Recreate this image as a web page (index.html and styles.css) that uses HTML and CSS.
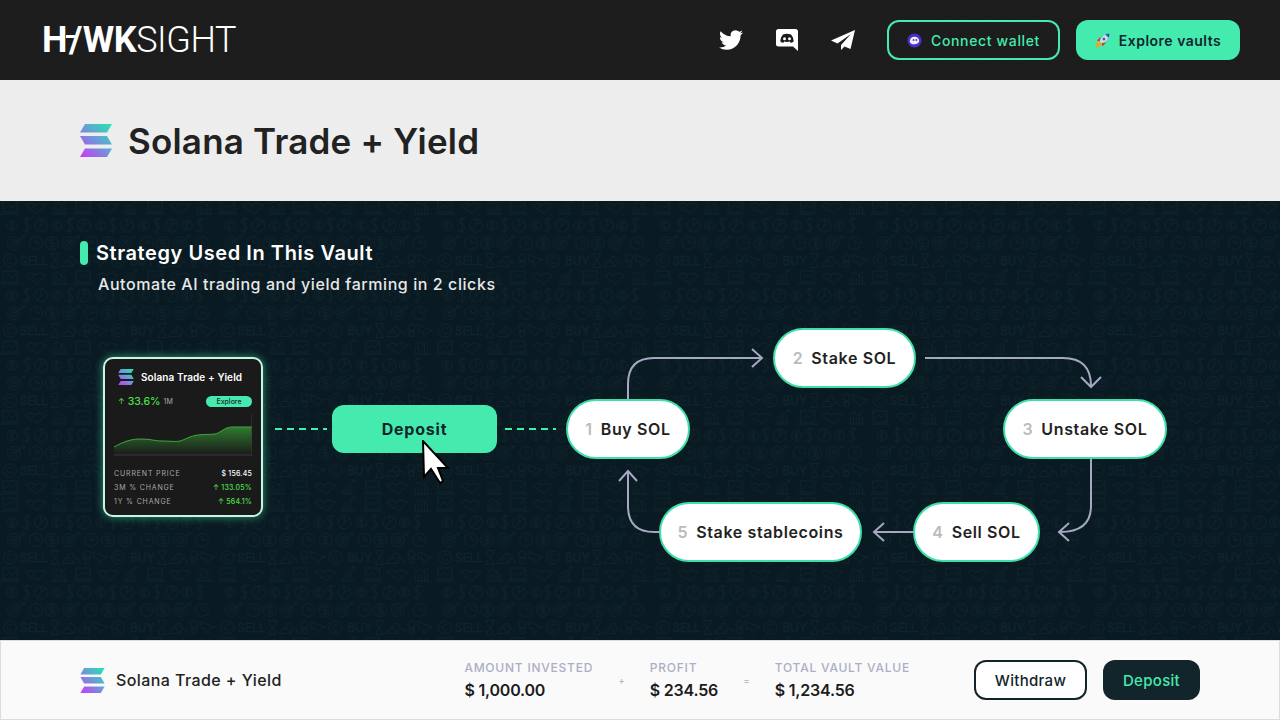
FILE: index.html
```html
<!DOCTYPE html>
<html lang="en">
  <head>
    <meta charset="UTF-8" />
    <meta name="viewport" content="width=device-width, initial-scale=1.0" />
    <title>Hawksight - Solana Trade + Yield</title>
    <link rel="stylesheet" href="styles.css">
  </head>
  <body>
    <svg class="sprites" aria-hidden="true">
      <defs>
        <linearGradient id="solGrad" gradientUnits="userSpaceOnUse" x1="32" y1="0" x2="0" y2="33">
          <stop offset="0" stop-color="#1fe8b0" />
          <stop offset="0.5" stop-color="#6f97d8" />
          <stop offset="1" stop-color="#cf35f8" />
        </linearGradient>
        <symbol id="sol" viewBox="0 0 32 33">
          <path fill="url(#solGrad)" d="M5 0H32L27 8.500H0z" />
          <path fill="url(#solGrad)" d="M0 12H27L32 20.500H5z" />
          <path fill="url(#solGrad)" d="M5 24.500H32L27 33H0z" />
        </symbol>
      </defs>
    </svg>

    <header class="topbar">
      <div class="logo"><span class="logo-bold">H<i class="logo-slash">/</i>WK</span><span class="logo-light">SIGHT</span></div>
      <div class="topbar-right">
        <div class="socials">
          <svg class="social-twitter" viewBox="0 0 24 24"><path fill="#fff" d="M23.953 4.570a10 10 0 01-2.825.775 4.958 4.958 0 002.163-2.723c-.951.555-2.005.959-3.127 1.184a4.920 4.920 0 00-8.384 4.482C7.690 8.095 4.067 6.130 1.640 3.162a4.822 4.822 0 00-.666 2.475c0 1.710.870 3.213 2.188 4.096a4.904 4.904 0 01-2.228-.616v.060a4.923 4.923 0 003.946 4.827 4.996 4.996 0 01-2.212.085 4.936 4.936 0 004.604 3.417 9.867 9.867 0 01-6.102 2.105c-.390 0-.779-.023-1.170-.067a13.995 13.995 0 007.557 2.209c9.053 0 13.998-7.496 13.998-13.985 0-.210 0-.420-.015-.630A9.935 9.935 0 0024 4.590z" /></svg>
          <svg class="social-discord" viewBox="0 0 22 22"><path fill="#fff" d="M2.500 0h17A2.500 2.500 0 0122 2.500V22l-5-4.500H2.500A2.500 2.500 0 010 15V2.500A2.500 2.500 0 012.500 0z" /><path fill="#1b1b1b" d="M7 5.500c2.500-1 5.500-1 8 0 1.600 1.800 2.500 4.200 2.700 6.900-1.100.8-2.100 1.200-3.100 1.400l-.8-1.200c-1.800.5-3.800.5-5.600 0l-.8 1.200c-1-.2-2-.6-3.100-1.400C4.500 9.700 5.400 7.300 7 5.500z" /><circle cx="8.500" cy="9.800" r="1.500" fill="#fff" /><circle cx="13.500" cy="9.800" r="1.500" fill="#fff" /></svg>
          <svg class="social-plane" viewBox="0 0 24 20"><path fill="#fff" d="M24 0 0 10.500l6.500 3L20 4 10 15v5l3.500-3.600 6 2.600z" /></svg>
        </div>
        <a class="btn-outline">
          <svg class="btn-icon" viewBox="0 0 16 16"><circle cx="8" cy="8" r="7.500" fill="#4a2fc9" /><path fill="#f1eefc" d="M3 9c0-3 2-5 5-5s5 2 5 4.500c0 1.800-2.500 3.500-5.500 3.500C5 12 3 11 3 9z" /><circle cx="7" cy="7.500" r="1" fill="#4a2fc9" /><circle cx="10" cy="7.500" r="1" fill="#4a2fc9" /></svg>
          Connect wallet
        </a>
        <a class="btn-solid">
          <svg class="btn-icon" viewBox="0 0 16 16"><path fill="#e8341f" d="M2 8 6 4 5 9zM8 14l4-4-5 1z" /><path fill="#f7a21e" d="M1 15.500c-.2-3 1-5 3-6.500l3 3c-1.500 2-3 3.300-6 3.500z" /><path fill="#d5d8e0" d="M5 9C7 4 10 1.500 15.500.5 15 5.500 12 9 7 11z" /><path fill="#2f55b8" d="M11 1.500 14.500 5c.6-1.400 1-3 1-4.500-1.500 0-3.100.4-4.500 1z" /><circle cx="9.500" cy="6.500" r="1.400" fill="#2f55b8" /></svg>
          Explore vaults
        </a>
      </div>
    </header>

    <section class="title-band">
      <svg class="sol-large"><use href="#sol" /></svg>
      <h1>Solana Trade + Yield</h1>
    </section>

    <main class="strategy">
      <svg class="pattern" width="1280" height="439" aria-hidden="true">
        <defs>
          <g id="i-mon"><rect x="-7" y="-7" width="14" height="11" /><path d="M-10 6H10M-5 1-1-3 2 0 6-5" /></g>
          <g id="i-hand"><path d="M-10-3-5-5-1-3 3-5 10-3 5 2 1 6-2 3-6 2zM-1-3-4 0" /></g>
          <g id="i-bars"><path d="M-7 6V-1M-4 6V-3M-1 6V0M2 6V-4M5 6V-2M-8 6H8M-7-4-3-6 1-3 6-7" /></g>
          <g id="i-up"><path d="M-6 6V2M-3 6V0M0 6V-2M3 6V-4M-7 6H6M-6-1-1-3 6-8M3-8H6V-5" /></g>
          <g id="i-cent"><circle r="5" /><path d="M2-2A2.500 2.500 0 102 2M0-4V4" /></g>
          <g id="i-dollar"><path d="M4-6A4 3 0 10 0-1 4 3.500 0 11-4 5M0-8V8" /></g>
          <g id="i-pie"><circle r="6.500" /><path d="M0 0V-6.500M0 0 5-4M0 0-4 5" /></g>
          <g id="i-target"><circle r="6.500" /><circle r="3.500" /><circle r=".8" /><path d="M0 0 9-6M7-7 11-7 9-4" /></g>
          <g id="i-clock"><circle r="6.500" /><path d="M0-4V0H4" /></g>
          <g id="i-coin"><circle r="6.500" /><path d="M2-2A2.500 2 0 10 0 0 2.500 2 0 11-2 2M0-4V4" /></g>
          <g id="i-copy"><circle r="6.500" /><path d="M2.500-2A3 3 0 10 2.500 2" /></g>
          <g id="i-glass"><path d="M-4-7H4M-4 7H4M-3-7V-4L3 4V7M3-7V-4L-3 4V7" /></g>
          <g id="i-pile"><path d="M-9 6-6 1H-1L2 6zM2 6 5 1H7L10 6M-4 1-1-4H2L4 1" /></g>
          <g id="i-bulb"><circle cy="-3" r="3.500" /><path d="M-2 1H2V6H-2zM-4 1-2 3M4 1 2 3" /></g>
          <g id="i-flag"><path d="M-7-6 5-1 8-1 3 2 0 6-2 1-6 1z" /></g>
          <pattern id="patRows" width="217.500" height="70" patternUnits="userSpaceOnUse" y="-2">
            <g class="pat-lines">
              <use href="#i-mon" x="10" y="9" /><use href="#i-hand" x="36" y="9" /><use href="#i-bars" x="60" y="9" />
              <use href="#i-mon" x="83" y="9" /><use href="#i-hand" x="108" y="9" /><use href="#i-up" x="131" y="9" />
              <use href="#i-mon" x="155" y="9" /><use href="#i-hand" x="180" y="9" /><use href="#i-bars" x="205" y="9" />

              <use href="#i-cent" x="12" y="26.500" /><use href="#i-dollar" x="27" y="26.500" /><use href="#i-pie" x="41" y="26.500" />
              <use href="#i-cent" x="57" y="26.500" /><use href="#i-dollar" x="70" y="26.500" /><use href="#i-pie" x="84" y="26.500" />
              <use href="#i-cent" x="101" y="26.500" /><use href="#i-dollar" x="113" y="26.500" /><use href="#i-pie" x="127" y="26.500" />
              <use href="#i-cent" x="144" y="26.500" /><use href="#i-dollar" x="157" y="26.500" /><use href="#i-pie" x="172" y="26.500" />
              <use href="#i-cent" x="187" y="26.500" /><use href="#i-dollar" x="200" y="26.500" />

              <use href="#i-target" x="14" y="44" /><use href="#i-clock" x="36" y="44" /><use href="#i-coin" x="52" y="44" />
              <use href="#i-target" x="69" y="44" /><use href="#i-clock" x="91" y="44" /><use href="#i-coin" x="108" y="44" />
              <use href="#i-target" x="125" y="44" /><use href="#i-clock" x="147" y="44" /><use href="#i-coin" x="163" y="44" />
              <use href="#i-target" x="180" y="44" /><use href="#i-clock" x="202" y="44" />

              <use href="#i-copy" x="10" y="61.500" /><use href="#i-glass" x="55" y="61.500" /><use href="#i-pile" x="71" y="61.500" />
              <use href="#i-bulb" x="87" y="61.500" /><use href="#i-flag" x="100" y="61.500" />
              <use href="#i-copy" x="118" y="61.500" /><use href="#i-glass" x="162" y="61.500" /><use href="#i-pile" x="178" y="61.500" />
              <use href="#i-bulb" x="194" y="61.500" /><use href="#i-flag" x="207" y="61.500" />
            </g>
            <text class="pat-text" x="20" y="66">SELL</text>
            <text class="pat-text" x="130" y="66">BUY</text>
          </pattern>
          <pattern id="patRowsLow" href="#patRows" y="295" />
        </defs>
        <rect width="1280" height="295" fill="url(#patRows)" />
        <rect y="295" width="1280" height="144" fill="url(#patRowsLow)" />
      </svg>

      <div class="strategy-head">
        <h2>Strategy Used In This Vault</h2>
        <p>Automate AI trading and yield farming in 2 clicks</p>
      </div>

      <div class="diagram">
        <svg class="links" viewBox="0 320 1280 320" width="1280" height="320">
          <path class="dash" d="M275 429H327M505 429H556" />
          <path class="flow" d="M628 400V384Q628 358 654 358H762M752 349 762 358 752 367" />
          <path class="flow" d="M925 358H1063Q1091 358 1091 386M1081 377 1091 387 1101 377" />
          <path class="flow" d="M1091 459V506Q1091 532 1060 532M1069 523 1059 532 1069 541" />
          <path class="flow" d="M914 532H875M884 523 874 532 884 541" />
          <path class="flow" d="M660 532H654Q628 532 628 506V472M619 481 628 471 637 481" />
        </svg>

        <div class="card">
          <div class="card-title"><svg class="sol-card"><use href="#sol" /></svg>Solana Trade + Yield</div>
          <div class="card-change">
            <span class="card-arrow">↑</span><span class="card-pct">33.6%</span><span class="card-period">1M</span>
            <span class="card-explore">Explore</span>
          </div>
          <svg class="card-chart" viewBox="0 0 138 42" width="138" height="42">
            <defs>
              <linearGradient id="areaGrad" x1="0" y1="0" x2="0" y2="1">
                <stop offset="0" stop-color="#2f7a2f" />
                <stop offset="1" stop-color="#2f7a2f" stop-opacity="0" />
              </linearGradient>
            </defs>
            <path fill="url(#areaGrad)" d="M0 33C6 30 14 25 26 25S40 27 48 27 62 28 66 27 76 22 84 21 100 21 104 19 112 13 118 13H138V41H0z" />
            <path fill="none" stroke="#3fa83a" d="M0 33C6 30 14 25 26 25S40 27 48 27 62 28 66 27 76 22 84 21 100 21 104 19 112 13 118 13H138" />
            <path fill="none" stroke="#3a3a3e" d="M138 0V41H0" />
          </svg>
          <div class="card-rows">
            <div class="card-row"><span>CURRENT PRICE</span><b>$ 156.45</b></div>
            <div class="card-row"><span>3M % CHANGE</span><b class="up">↑ 133.05%</b></div>
            <div class="card-row"><span>1Y % CHANGE</span><b class="up">↑ 564.1%</b></div>
          </div>
        </div>

        <div class="deposit-big">Deposit</div>
        <svg class="cursor" viewBox="0 0 28 46" width="28" height="46"><path fill="#fff" stroke="#000" stroke-width="2" d="M1 1 2 37 9 29 18 43 21 41 16 28 26 28z" /></svg>

        <div class="step step-buy"><span class="num">1</span>Buy SOL</div>
        <div class="step step-stake"><span class="num">2</span>Stake SOL</div>
        <div class="step step-unstake"><span class="num">3</span>Unstake SOL</div>
        <div class="step step-sell"><span class="num">4</span>Sell SOL</div>
        <div class="step step-stable"><span class="num">5</span>Stake stablecoins</div>
      </div>
    </main>

    <footer class="bottombar">
      <div class="vault-name"><svg class="sol-small"><use href="#sol" /></svg>Solana Trade + Yield</div>
      <div class="stats">
        <div class="stat"><span class="stat-label">AMOUNT INVESTED</span><span class="stat-value">$ 1,000.00</span></div>
        <span class="op">+</span>
        <div class="stat"><span class="stat-label">PROFIT</span><span class="stat-value">$ 234.56</span></div>
        <span class="op">=</span>
        <div class="stat"><span class="stat-label">TOTAL VAULT VALUE</span><span class="stat-value">$ 1,234.56</span></div>
      </div>
      <div class="actions">
        <a class="btn-withdraw">Withdraw</a>
        <a class="btn-deposit">Deposit</a>
      </div>
    </footer>
  </body>
</html>
```

FILE: styles.css
```css
* {
  box-sizing: border-box;
}

html,
body {
  margin: 0;
  padding: 0;
  width: 1280px;
  height: 720px;
  overflow: hidden;
  font-family: "Inter", "Noto Sans", sans-serif;
}

body {
  display: flex;
  flex-direction: column;
  background-color: #0a1a22;
}

.sprites {
  position: absolute;
  width: 0;
  height: 0;
}

/* top bar */
.topbar {
  height: 80px;
  flex: none;
  background-color: #191919;
  background-image: url("data:image/svg+xml,%3Csvg xmlns='http://www.w3.org/2000/svg' width='160' height='160'%3E%3Cfilter id='n'%3E%3CfeTurbulence type='fractalNoise' baseFrequency='.9' numOctaves='2'/%3E%3CfeColorMatrix values='0 0 0 0 1 0 0 0 0 1 0 0 0 0 1 0 0 0 .03 0'/%3E%3C/filter%3E%3Crect width='160' height='160' filter='url(%23n)'/%3E%3C/svg%3E");
  display: flex;
  align-items: center;
  justify-content: space-between;
  padding: 0 40px 0 42px;
}

.logo {
  font-family: "Roboto", sans-serif;
  font-size: 36px;
  line-height: 1;
  color: #ffffff;
  display: flex;
}

.logo-bold {
  font-weight: 700;
  letter-spacing: -0.5px;
}

.logo-slash {
  position: relative;
  font-style: normal;
  margin: 0 1px 0 2px;
}

/* crossbar from the H into the slanted A */
.logo-slash::before {
  content: "";
  position: absolute;
  left: -3px;
  top: 16px;
  width: 9px;
  height: 3px;
  background-color: #ffffff;
}

.logo-light {
  font-weight: 300;
  letter-spacing: -0.4px;
}

.topbar-right {
  display: flex;
  align-items: center;
  gap: 16px;
}

.socials {
  display: flex;
  align-items: center;
  margin-right: 16px;
}

.social-twitter {
  width: 24px;
  height: 24px;
}

.social-discord {
  width: 22px;
  height: 22px;
  margin-left: 33px;
}

.social-plane {
  width: 24px;
  height: 20px;
  margin-left: 33px;
}

.btn-outline,
.btn-solid {
  height: 40px;
  border-radius: 12px;
  display: flex;
  align-items: center;
  justify-content: center;
  gap: 9px;
  font-size: 14px;
  font-weight: 500;
  letter-spacing: 0.65px;
}

.btn-outline {
  width: 173px;
  border: 2px solid #45ebae;
  color: #45ebae;
}

.btn-solid {
  width: 164px;
  background-color: #45ebae;
  color: #12252b;
  font-weight: 600;
  letter-spacing: 0.5px;
}

.btn-icon {
  width: 15px;
  height: 15px;
}

/* title band */
.title-band {
  height: 121px;
  flex: none;
  background-color: #f0f0f0;
  background-image: url("data:image/svg+xml,%3Csvg xmlns='http://www.w3.org/2000/svg' width='160' height='160'%3E%3Cfilter id='n'%3E%3CfeTurbulence type='fractalNoise' baseFrequency='.9' numOctaves='2'/%3E%3CfeColorMatrix values='0 0 0 0 0 0 0 0 0 0 0 0 0 0 0 0 0 0 .02 0'/%3E%3C/filter%3E%3Crect width='160' height='160' filter='url(%23n)'/%3E%3C/svg%3E");
  display: flex;
  align-items: center;
  gap: 16px;
  padding-left: 80px;
}

.sol-large {
  width: 32px;
  height: 33px;
}

h1 {
  margin: 0;
  font-size: 35px;
  font-weight: 600;
  color: #222222;
  letter-spacing: 0.2px;
}

/* strategy section */
.strategy {
  position: relative;
  flex: 1;
  display: flex;
  flex-direction: column;
  padding-top: 40px;
  background-color: #0a1a22;
}

.pattern {
  position: absolute;
  left: 0;
  top: 0;
}

.pat-lines {
  fill: none;
  stroke: #10272f;
  stroke-width: 0.7;
}

.pat-text {
  font-family: "Inter", sans-serif;
  font-size: 12px;
  font-weight: 300;
  fill: none;
  stroke: #10272f;
  stroke-width: 0.5;
}

.strategy-head {
  position: relative;
  padding-left: 80px;
  height: 79px;
  flex: none;
}

h2 {
  margin: 0;
  height: 24px;
  font-size: 20px;
  line-height: 24px;
  font-weight: 600;
  color: #ffffff;
  display: flex;
  align-items: center;
  letter-spacing: 0.57px;
}

h2::before {
  content: "";
  width: 8px;
  height: 24px;
  border-radius: 4px;
  background-color: #45ebae;
  margin-right: 8px;
}

.strategy-head p {
  margin: 7px 0 0 18px;
  font-size: 16px;
  line-height: 24px;
  font-weight: 500;
  color: #e8e8e8;
  letter-spacing: 0.57px;
}

/* diagram, nodes sit on a free canvas */
.diagram {
  position: relative;
  flex: 1;
}

.links {
  position: absolute;
  left: 0;
  top: 0;
}

.dash {
  fill: none;
  stroke: #3ef2a6;
  stroke-width: 2;
  stroke-dasharray: 7 5;
}

.flow {
  fill: none;
  stroke: #a5a8c0;
  stroke-width: 2;
}

.card {
  position: absolute;
  left: 103px;
  top: 37px;
  width: 160px;
  height: 160px;
  background-color: #1a1a1a;
  border: 2px solid #c9f5e2;
  border-radius: 10px;
  box-shadow: 0 0 8px rgba(69, 235, 174, 0.6);
  padding: 10px 9px 0;
  color: #ffffff;
}

.card-title {
  display: flex;
  align-items: center;
  gap: 7px;
  height: 16px;
  padding-left: 4px;
  font-size: 10px;
  font-weight: 600;
  letter-spacing: 0.1px;
}

.sol-card {
  width: 16px;
  height: 16px;
}

.card-change {
  display: flex;
  align-items: center;
  margin-top: 10px;
  height: 12px;
  padding-left: 4px;
  color: #4be04b;
}

.card-arrow {
  font-size: 8px;
  margin-right: 3px;
}

.card-pct {
  font-size: 10.5px;
  font-weight: 500;
}

.card-period {
  font-size: 7px;
  color: #aaaaaa;
  margin-left: 3px;
}

.card-explore {
  margin-left: auto;
  width: 46px;
  height: 11px;
  border-radius: 6px;
  background-color: #45ebae;
  color: #1a2a2a;
  font-size: 7px;
  font-weight: 500;
  line-height: 11px;
  text-align: center;
}

.card-chart {
  display: block;
  margin-top: 7px;
}

.card-rows {
  margin-top: 11px;
}

.card-row {
  display: flex;
  justify-content: space-between;
  height: 14px;
  line-height: 14px;
  font-size: 7px;
  letter-spacing: 0.85px;
  color: #a8a8a8;
}

.card-row b {
  font-weight: 500;
  color: #ffffff;
  letter-spacing: 0.2px;
}

.card-row b.up {
  color: #4be04b;
}

.deposit-big {
  position: absolute;
  left: 332px;
  top: 85px;
  width: 165px;
  height: 48px;
  border-radius: 12px;
  background-color: #45ebae;
  color: #12252b;
  font-size: 16px;
  font-weight: 700;
  letter-spacing: 0.8px;
  line-height: 48px;
  text-align: center;
}

.cursor {
  position: absolute;
  left: 422px;
  top: 120px;
}

.step {
  position: absolute;
  height: 60px;
  border: 2px solid #3fe0a8;
  border-radius: 30px;
  background-color: #ffffff;
  color: #222222;
  font-size: 16px;
  font-weight: 600;
  letter-spacing: 0.62px;
  display: flex;
  align-items: center;
  justify-content: center;
  white-space: nowrap;
}

.num {
  color: #bbbbbb;
  margin-right: 8px;
}

.step-buy {
  left: 566px;
  top: 79px;
  width: 124px;
}

.step-stake {
  left: 773px;
  top: 8px;
  width: 143px;
}

.step-unstake {
  left: 1003px;
  top: 79px;
  width: 164px;
}

.step-sell {
  left: 913px;
  top: 182px;
  width: 127px;
}

.step-stable {
  left: 659px;
  top: 182px;
  width: 203px;
}

/* bottom bar */
.bottombar {
  height: 80px;
  flex: none;
  background-color: #fafafa;
  border: 1px solid #dddddd;
  display: flex;
  align-items: center;
  padding: 0 79px;
}

.vault-name {
  display: flex;
  align-items: center;
  gap: 11px;
  font-size: 16px;
  font-weight: 500;
  letter-spacing: 0.42px;
  color: #222222;
}

.sol-small {
  width: 25px;
  height: 25px;
}

.stats {
  display: flex;
  align-items: center;
  gap: 25px;
  margin-left: auto;
}

.stat {
  display: flex;
  flex-direction: column;
  gap: 4px;
}

.stat-label {
  font-size: 12px;
  line-height: 16px;
  font-weight: 500;
  color: #acaec6;
  letter-spacing: 0.77px;
}

.stat-value {
  font-size: 16px;
  line-height: 20px;
  font-weight: 600;
  letter-spacing: -0.2px;
  color: #1c1c1c;
}

.op {
  font-size: 10px;
  color: #acaec6;
}

.actions {
  display: flex;
  gap: 16px;
  margin-left: 64px;
}

.btn-withdraw,
.btn-deposit {
  height: 40px;
  border-radius: 12px;
  font-size: 15px;
  font-weight: 500;
  letter-spacing: 0.3px;
  display: flex;
  align-items: center;
  justify-content: center;
}

.btn-withdraw {
  width: 113px;
  border: 2px solid #12252b;
  color: #12252b;
  background-color: #ffffff;
}

.btn-deposit {
  width: 97px;
  background-color: #12252b;
  color: #45ebae;
}
```
